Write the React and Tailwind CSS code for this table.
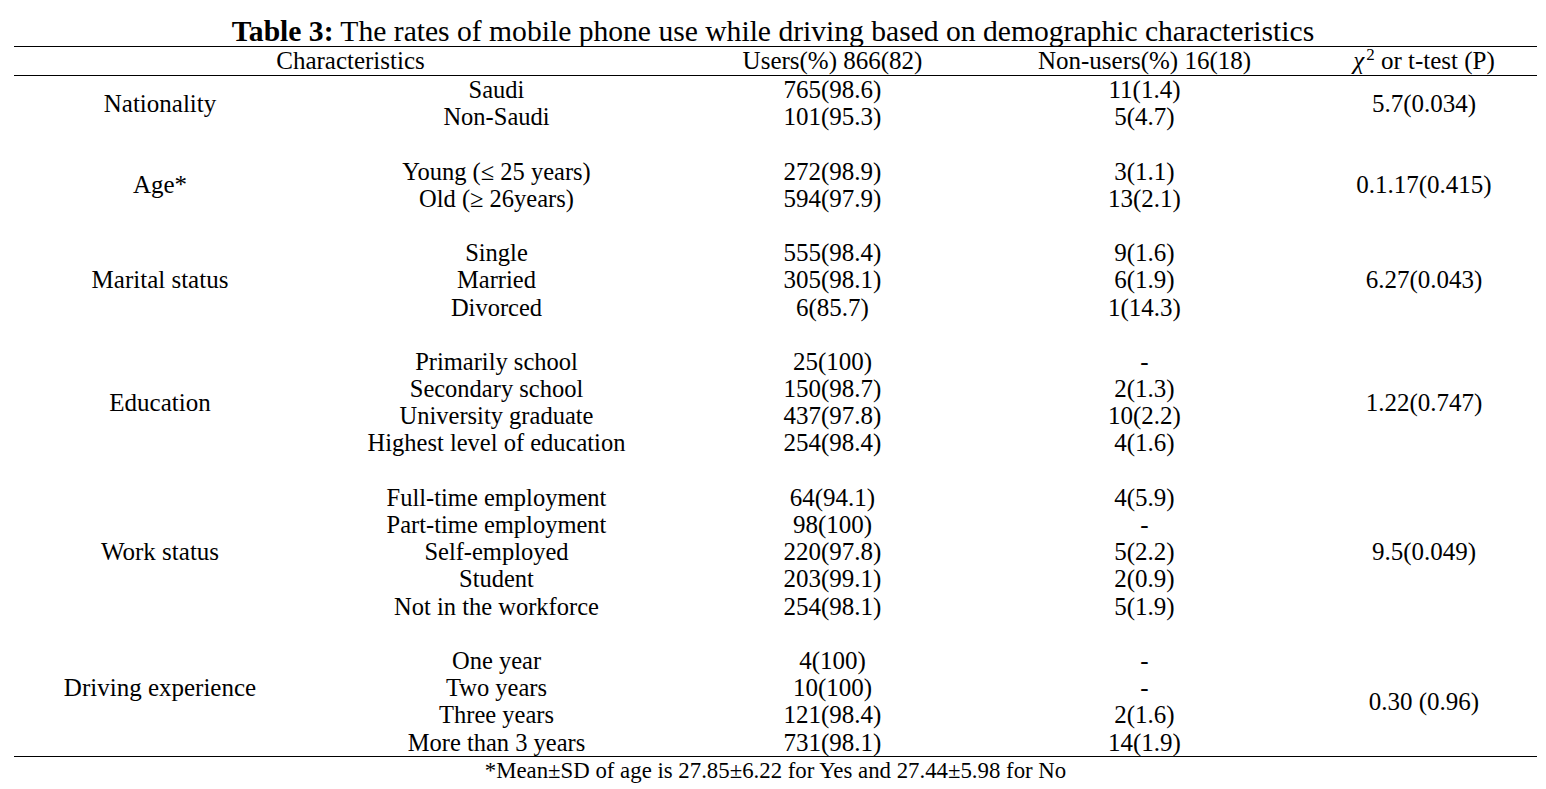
import React from "react";

const groups = [
  {
    label: "Nationality",
    rows: [
      ["Saudi", "765(98.6)", "11(1.4)"],
      ["Non-Saudi", "101(95.3)", "5(4.7)"],
    ],
    stat: "5.7(0.034)",
  },
  {
    label: "Age*",
    rows: [
      ["Young (\u2264 25 years)", "272(98.9)", "3(1.1)"],
      ["Old (\u2265 26years)", "594(97.9)", "13(2.1)"],
    ],
    stat: "0.1.17(0.415)",
  },
  {
    label: "Marital status",
    rows: [
      ["Single", "555(98.4)", "9(1.6)"],
      ["Married", "305(98.1)", "6(1.9)"],
      ["Divorced", "6(85.7)", "1(14.3)"],
    ],
    stat: "6.27(0.043)",
  },
  {
    label: "Education",
    rows: [
      ["Primarily school", "25(100)", "-"],
      ["Secondary school", "150(98.7)", "2(1.3)"],
      ["University graduate", "437(97.8)", "10(2.2)"],
      ["Highest level of education", "254(98.4)", "4(1.6)"],
    ],
    stat: "1.22(0.747)",
  },
  {
    label: "Work status",
    rows: [
      ["Full-time employment", "64(94.1)", "4(5.9)"],
      ["Part-time employment", "98(100)", "-"],
      ["Self-employed", "220(97.8)", "5(2.2)"],
      ["Student", "203(99.1)", "2(0.9)"],
      ["Not in the workforce", "254(98.1)", "5(1.9)"],
    ],
    stat: "9.5(0.049)",
  },
  {
    label: "Driving experience",
    rows: [
      ["One year", "4(100)", "-"],
      ["Two years", "10(100)", "-"],
      ["Three years", "121(98.4)", "2(1.6)"],
      ["More than 3 years", "731(98.1)", "14(1.9)"],
    ],
    stat: "0.30 (0.96)",
    labelTop: true,
  },
];

function Group({ g }) {
  return (
    <div className="grid grid-cols-[292px_381px_291px_333px_226px]">
      <div
        className={
          g.labelTop
            ? "flex justify-center items-start pt-[27.2px]"
            : "flex justify-center items-center"
        }
      >
        <span className="leading-[27.2px]">{g.label}</span>
      </div>
      <div className="flex flex-col items-center text-[24.5px]">
        {g.rows.map((r, i) => (
          <div key={i} className="h-[27.2px] leading-[27.2px] whitespace-nowrap">
            {r[0]}
          </div>
        ))}
      </div>
      <div className="flex flex-col items-center">
        {g.rows.map((r, i) => (
          <div key={i} className="h-[27.2px] leading-[27.2px] whitespace-nowrap">
            {r[1]}
          </div>
        ))}
      </div>
      <div className="flex flex-col items-center">
        {g.rows.map((r, i) => (
          <div key={i} className="h-[27.2px] leading-[27.2px] whitespace-nowrap">
            {r[2]}
          </div>
        ))}
      </div>
      <div className="flex justify-center items-center">
        <span className="leading-[27.2px]">{g.stat}</span>
      </div>
    </div>
  );
}

export default function App() {
  return (
    <div
      className="w-[1546px] h-[789px] bg-white text-black overflow-hidden"
      style={{ fontFamily: '"Liberation Serif", "Times New Roman", serif' }}
    >
      <div className="pt-[16px] text-center text-[29.6px] leading-[30px] whitespace-nowrap">
        <span className="font-bold">Table 3:</span> The rates of mobile phone use while driving based on demographic characteristics
      </div>
      <div className="mx-[14px] w-[1523px] text-[25px]">
        <div className="border-t border-b border-black grid grid-cols-[673px_291px_333px_226px] h-[30px] items-center">
          <div className="text-center leading-[28px]">Characteristics</div>
          <div className="text-center leading-[28px]">Users(%) 866(82)</div>
          <div className="text-center leading-[28px]">Non-users(%) 16(18)</div>
          <div className="text-center leading-[28px]">
            <i>&#967;</i>
            <sup className="text-[17px] relative -top-[9px] ml-[2px]">2</sup> or t-test (P)
          </div>
        </div>
        <div className="flex flex-col gap-[27.2px] border-b border-black">
          {groups.map((g) => (
            <Group key={g.label} g={g} />
          ))}
        </div>
        <div className="text-center text-[22.8px] leading-[28px] whitespace-nowrap">
          *Mean&plusmn;SD of age is 27.85&plusmn;6.22 for Yes and 27.44&plusmn;5.98 for No
        </div>
      </div>
    </div>
  );
}
